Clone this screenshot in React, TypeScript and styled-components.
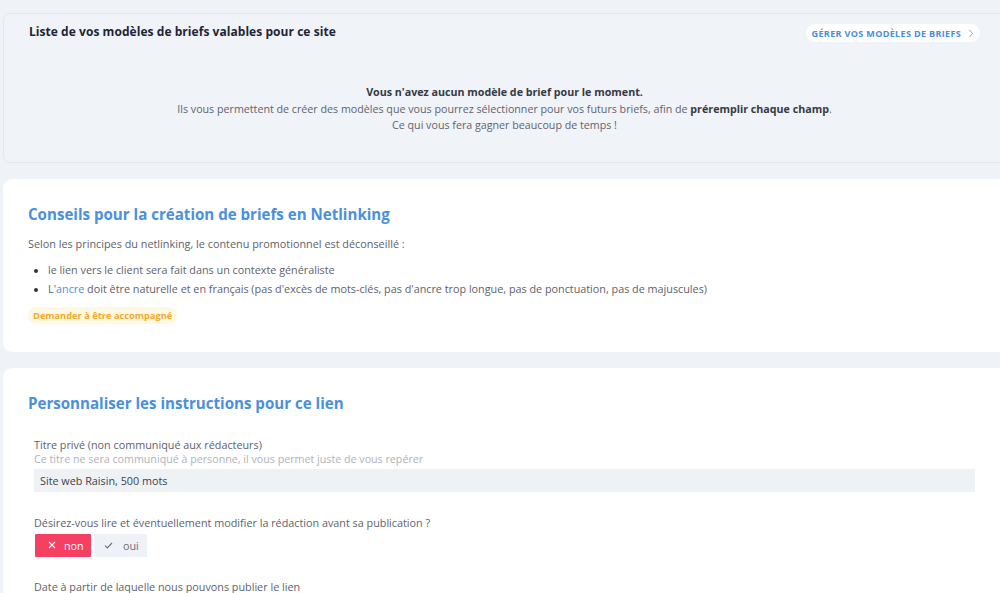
import React from "react";
import styled, { createGlobalStyle } from "styled-components";

const Global = createGlobalStyle`
  html, body { margin: 0; padding: 0; }
  body {
    background: #eff2f7;
    font-family: "Open Sans", "Noto Sans", sans-serif;
    overflow: hidden;
    width: 1000px;
    height: 593px;
  }
`;

const Page = styled.div`
  padding: 13px 0 0 3px;
  display: flex;
  flex-direction: column;
  gap: 16px;
  width: 1003px;
`;

const TemplatesCard = styled.section`
  background: #f0f3f8;
  border: 1px solid #e3e8ef;
  border-radius: 7px;
  padding: 7px 25px 28px 25px;
  display: flex;
  flex-direction: column;
`;

const HeaderRow = styled.div`
  display: flex;
  align-items: center;
  justify-content: space-between;
  height: 20px;
`;

const SmallTitle = styled.h2`
  margin: 0;
  font-size: 12px;
  font-weight: 700;
  color: #1f2436;
  letter-spacing: 0.05px;
`;

const PillLink = styled.a`
  display: flex;
  align-items: center;
  gap: 7px;
  height: 18px;
  padding: 0 6px 0 6px;
  margin-top: 4px;
  background: #ffffff;
  border-radius: 9px;
  color: #4a8fdb;
  font-size: 9.1px;
  font-weight: 700;
  letter-spacing: 0.3px;
  text-transform: uppercase;
  text-decoration: none;
`;

const Empty = styled.div`
  margin-top: 43px;
  text-align: center;
  font-size: 10.7px;
  line-height: 16.5px;
  color: #5f6470;
`;

const EmptyStrong = styled.div`
  font-weight: 700;
  color: #353a45;
`;

const Strong = styled.strong`
  font-weight: 700;
  color: #353a45;
`;

const Card = styled.section<{ $pb?: number }>`
  background: #ffffff;
  border-radius: 9px;
  padding: 25px 25px ${(p) => p.$pb ?? 24}px 25px;
  display: flex;
  flex-direction: column;
`;

const BlueTitle = styled.h2`
  margin: 0;
  font-size: 15.1px;
  line-height: 20px;
  font-weight: 700;
  color: #4a90dc;
`;

const Para = styled.p`
  margin: 12px 0 0 0;
  font-size: 10.85px;
  line-height: 16px;
  color: #5d626d;
`;

const List = styled.ul`
  margin: 8px 0 0 0;
  padding: 0 0 0 20px;
  font-size: 10.8px;
  line-height: 19px;
  color: #5d626d;
  li::marker { color: #333; font-size: 10px; }
`;

const Link = styled.span`
  color: #4a90dc;
`;

const Badge = styled.span`
  align-self: flex-start;
  margin-top: 9px;
  padding: 0 5px;
  height: 17px;
  display: flex;
  align-items: center;
  background: #fff8e3;
  border-radius: 8px;
  color: #eeaa2b;
  font-size: 9.3px;
  font-weight: 700;
`;

const Form = styled.div`
  display: flex;
  flex-direction: column;
  padding: 0 6px;
  margin-top: 24px;
`;

const Field = styled.div<{ $mt?: number }>`
  display: flex;
  flex-direction: column;
  margin-top: ${(p) => p.$mt ?? 0}px;
`;

const Label = styled.label`
  font-size: 10.8px;
  line-height: 15px;
  color: #5d626d;
`;

const Hint = styled.span`
  font-size: 10.7px;
  line-height: 15px;
  color: #aeb3bb;
`;

const Input = styled.div`
  margin-top: 2px;
  height: 23px;
  background: #eff2f5;
  display: flex;
  align-items: center;
  padding: 0 6px;
  font-size: 10.8px;
  color: #3d424c;
`;

const Toggle = styled.div`
  display: flex;
  gap: 3px;
  margin-top: 4px;
  padding-left: 1px;
`;

const ToggleBtn = styled.button<{ $active?: boolean }>`
  display: flex;
  align-items: center;
  gap: ${(p) => (p.$active ? 8 : 10)}px;
  height: 23px;
  width: ${(p) => (p.$active ? 56 : 53)}px;
  padding: 0 0 0 ${(p) => (p.$active ? 13 : 10)}px;
  border: 0;
  border-radius: 1px;
  font-family: inherit;
  font-size: 10.8px;
  background: ${(p) => (p.$active ? "#f53f63" : "#eef1f5")};
  color: ${(p) => (p.$active ? "#ffffff" : "#6b707a")};
`;

const Chevron = () => (
  <svg width="6" height="9" viewBox="0 0 6 9" fill="none">
    <path d="M1.5 1 L4.5 4.5 L1.5 8" stroke="#9aa3b0" strokeWidth="1" />
  </svg>
);

const XIcon = () => (
  <svg width="8" height="8" viewBox="0 0 8 8" fill="none">
    <path d="M1 1 L7 7 M7 1 L1 7" stroke="#fff" strokeWidth="1.1" />
  </svg>
);

const CheckIcon = () => (
  <svg width="9" height="7" viewBox="0 0 9 7" fill="none">
    <path d="M1 3.6 L3.3 6 L8 1" stroke="#6b707a" strokeWidth="1.1" />
  </svg>
);

export default function App() {
  return (
    <>
      <Global />
      <Page>
        <TemplatesCard>
          <HeaderRow>
            <SmallTitle>Liste de vos modèles de briefs valables pour ce site</SmallTitle>
            <PillLink>
              Gérer vos modèles de briefs
              <Chevron />
            </PillLink>
          </HeaderRow>
          <Empty>
            <EmptyStrong>Vous n'avez aucun modèle de brief pour le moment.</EmptyStrong>
            <div>
              Ils vous permettent de créer des modèles que vous pourrez sélectionner pour vos futurs briefs, afin de{" "}
              <Strong>préremplir chaque champ</Strong>.
            </div>
            <div>Ce qui vous fera gagner beaucoup de temps !</div>
          </Empty>
        </TemplatesCard>

        <Card $pb={28}>
          <BlueTitle>Conseils pour la création de briefs en Netlinking</BlueTitle>
          <Para>Selon les principes du netlinking, le contenu promotionnel est déconseillé :</Para>
          <List>
            <li>le lien vers le client sera fait dans un contexte généraliste</li>
            <li>
              L'<Link>ancre</Link> doit être naturelle et en français (pas d'excès de mots-clés, pas d'ancre trop
              longue, pas de ponctuation, pas de majuscules)
            </li>
          </List>
          <Badge>Demander à être accompagné</Badge>
        </Card>

        <Card $pb={40}>
          <BlueTitle>Personnaliser les instructions pour ce lien</BlueTitle>
          <Form>
            <Field>
              <Label>Titre privé (non communiqué aux rédacteurs)</Label>
              <Hint>Ce titre ne sera communiqué à personne, il vous permet juste de vous repérer</Hint>
              <Input>Site web Raisin, 500 mots</Input>
            </Field>
            <Field $mt={23}>
              <Label>Désirez-vous lire et éventuellement modifier la rédaction avant sa publication ?</Label>
              <Toggle>
                <ToggleBtn $active>
                  <XIcon />
                  non
                </ToggleBtn>
                <ToggleBtn>
                  <CheckIcon />
                  oui
                </ToggleBtn>
              </Toggle>
            </Field>
            <Field $mt={22}>
              <Label>Date à partir de laquelle nous pouvons publier le lien</Label>
            </Field>
          </Form>
        </Card>
      </Page>
    </>
  );
}
